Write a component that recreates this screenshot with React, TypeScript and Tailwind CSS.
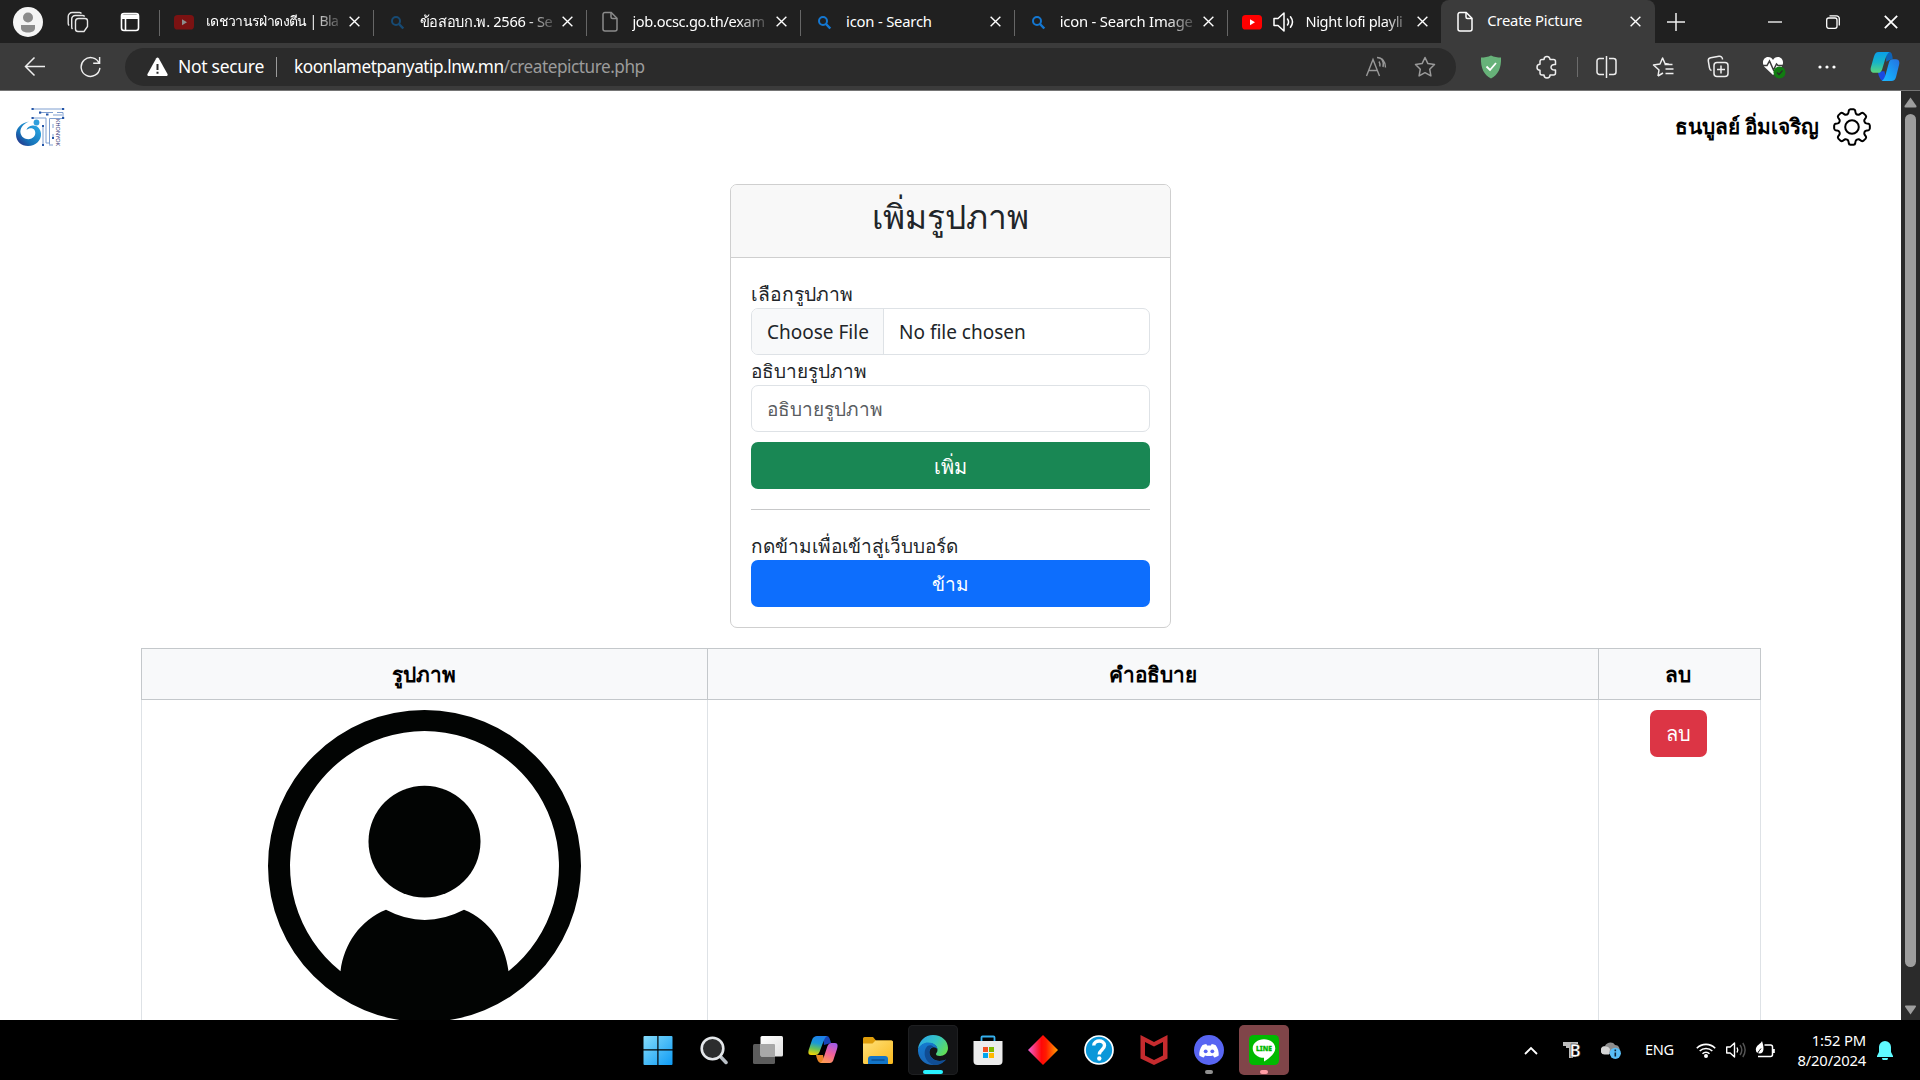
import type { ReactNode } from "react";

type IconProps = { className?: string };

const X = ({ className = "w-[11px] h-[11px]" }: IconProps) => (
  <svg className={className} viewBox="0 0 12 12" stroke="#fff" strokeWidth="1.5" fill="none">
    <path d="M.7.7l10.6 10.6M11.3.7L.7 11.3" />
  </svg>
);

const YouTube = ({ dim = false }: { dim?: boolean }) => (
  <svg className="w-5 h-5 shrink-0" viewBox="0 0 20 20">
    <rect x="0" y="3" width="20" height="14.5" rx="3.6" fill={dim ? "#7b1212" : "#f00"} />
    <path d="M8 7.2v6l5-3z" fill={dim ? "#8d8d8d" : "#fff"} />
  </svg>
);

const SearchTab = ({ dim = false }: { dim?: boolean }) => (
  <svg className="-ml-px mr-px w-5 h-5 shrink-0" viewBox="0 0 20 20" fill="none" stroke={dim ? "#174a73" : "#1477d1"} strokeWidth="2">
    <circle cx="9" cy="9" r="4" />
    <path d="M12 12l4.300 4.500" strokeWidth="2.500" />
  </svg>
);

const Doc = ({ dim = false }: { dim?: boolean }) => (
  <svg className="-ml-px mr-px w-5 h-[22px] shrink-0" viewBox="0 0 20 22" fill="none" stroke={dim ? "#8b8b8b" : "#fff"} strokeWidth="1.500">
    <path d="M5 1.500h6.200L17 7.300V18a2 2 0 0 1-2 2H5a2 2 0 0 1-2-2V3.500a2 2 0 0 1 2-2z" />
    <path d="M11 1.700V6a1.500 1.500 0 0 0 1.500 1.500H17" />
  </svg>
);

const Sound = () => (
  <svg className="ml-[10px] w-[23px] h-[22px] shrink-0" viewBox="0 0 23 22" fill="none" stroke="#fff" strokeWidth="1.500" strokeLinejoin="round" strokeLinecap="round">
    <path d="M2 7.500h4L12 2v18l-6-5.500H2z" />
    <path d="M15.500 8c1.400 2 1.400 4 0 6M18.500 5.800c2.600 3.400 2.600 7 0 10.400" />
  </svg>
);

type TabProps = { icon: ReactNode; title: string; gap: string; w: string; text?: string; fade?: boolean };

function Tab({ icon, title, gap, w, text = "text-[14.800px] tracking-[-0.200px]", fade = true }: TabProps) {
  return (
    <div className="flex h-[42px] w-[213.700px] shrink-0 items-center border-l border-[#606060] pl-[14px] [border-image:linear-gradient(to_bottom,transparent_10px,#666_10px,#666_34px,transparent_34px)_1]">
      {icon}
      <div className={`${gap} ${w} ${text} h-[26px] shrink-0 whitespace-nowrap leading-6 text-white ${fade ? "[mask-image:linear-gradient(to_right,#000_78%,rgba(0,0,0,0.150)_100%)]" : ""}`}>
        {title}
      </div>
      <div className="ml-auto mr-[13px]"><X /></div>
    </div>
  );
}

function TabStrip() {
  return (
    <div className="flex h-[43px] items-center bg-[#202020]">
      <div className="ml-[13px] flex w-[146px] shrink-0 items-center">
        <svg className="h-[30px] w-[30px]" viewBox="0 0 30 30">
          <circle cx="15" cy="15" r="15" fill="#f5f5f5" />
          <circle cx="15" cy="10.500" r="5" fill="#8b8b8b" />
          <path d="M8 18h14v3c0 3-3 4.500-7 4.500S8 24 8 21z" fill="#8b8b8b" />
        </svg>
        <svg className="ml-6 h-[22px] w-[22px]" viewBox="0 0 22 22" fill="none" stroke="#e6e6e6" strokeWidth="1.400">
          <path d="M11.500 7.500h6.500a2.500 2.500 0 0 1 2.500 2.500v5.500l-3.500 5H11a2.500 2.500 0 0 1-2.500-2.500v-7.500a3 3 0 0 1 3-3z" />
          <path d="M5.500 18A2.500 2.500 0 0 1 4.700 16V8a3.500 3.500 0 0 1 3.500-3.500h7.300a3 3 0 0 1 2.200 1M2.200 14.500A2.500 2.500 0 0 1 1.200 12.500V5.500a4 4 0 0 1 4-4H12A3 3 0 0 1 14.500 2.500" />
        </svg>
        <svg className="ml-[31px] h-5 w-5" viewBox="0 0 20 20" fill="none" stroke="#fff" strokeWidth="1.600">
          <rect x="1.500" y="1.500" width="17" height="17" rx="2.500" />
          <path d="M1.500 6.300h17M5.500 6v12" />
          <path d="M2 4.200h16" strokeWidth="3.500" />
        </svg>
      </div>
      <Tab icon={<YouTube dim />} title="เดชวานรฝ่าดงตีน | Bla" gap="ml-3" w="w-[135px]" text="text-[14px] tracking-[-0.650px]" />
      <Tab icon={<SearchTab dim />} title="ข้อสอบก.พ. 2566 - Se" gap="ml-3" w="w-[135px]" text="text-[14.600px] tracking-[-0.300px]" />
      <Tab icon={<Doc dim />} title="job.ocsc.go.th/exam" gap="ml-[11px]" w="w-[135px]" text="text-[14.600px] tracking-[-0.300px]" />
      <Tab icon={<SearchTab />} title="icon - Search" gap="ml-[11px]" w="w-[135px]" fade={false} />
      <Tab icon={<SearchTab />} title="icon - Search Image" gap="ml-[11px]" w="w-[135px]" />
      <Tab icon={<><YouTube /><Sound /></>} title="Night lofi playli" gap="ml-[10px]" w="w-[103px]" text="text-[14.600px] tracking-[-0.350px]" />
      <div className="flex h-[43px] w-[214px] shrink-0 items-center rounded-t-[8px] bg-[#3b3b3b] pl-[15px]">
        <Doc />
        <span className="ml-[11px] w-[130px] whitespace-nowrap pb-[2px] text-[14.800px] tracking-[-0.200px] text-white">Create Picture</span>
        <div className="ml-auto mr-[14px]"><X /></div>
      </div>
      <svg className="ml-3 h-[18px] w-[18px]" viewBox="0 0 18 18" stroke="#eee" strokeWidth="1.500"><path d="M9 0v18M0 9h18" /></svg>
      <div className="ml-auto mr-[22px] flex items-center gap-[44px]">
        <svg className="h-[14px] w-[14px]" viewBox="0 0 14 14" stroke="#fff" strokeWidth="1.300"><path d="M0 7h14" /></svg>
        <svg className="h-[14px] w-[14px]" viewBox="0 0 14 14" stroke="#fff" strokeWidth="1.300" fill="none">
          <rect x=".7" y="3" width="10.300" height="10.300" rx="2" />
          <path d="M3.500 .8H10.500A2.800 2.800 0 0 1 13.300 3.600V10.500" />
        </svg>
        <X className="h-[14px] w-[14px]" />
      </div>
    </div>
  );
}

const Star = ({ className = "" }: IconProps) => (
  <svg className={className} viewBox="0 0 22 22" fill="none" stroke="#9a9a9a" strokeWidth="1.500" strokeLinejoin="round">
    <path d="M11 1.500l2.900 6.100 6.600.9-4.800 4.700 1.200 6.700L11 16.700l-5.900 3.200 1.200-6.700L1.500 8.500l6.600-.9z" />
  </svg>
);

function Toolbar() {
  return (
    <div className="flex h-12 items-center border-b border-[#757575] bg-[#3b3b3b]">
      <svg className="ml-6 h-[22px] w-[22px]" viewBox="0 0 22 22" fill="none" stroke="#eee" strokeWidth="1.500"><path d="M21 10.500H1.500M10.500 1.500l-9 9 9 9" /></svg>
      <svg className="ml-[33px] mr-px h-[23px] w-[23px]" viewBox="0 0 24 24" fill="none" stroke="#eee" strokeWidth="1.500">
        <path d="M21.200 9A9.800 9.800 0 1 0 21.800 13.500M21.500 2v6.700h-6.700" />
      </svg>
      <div className="ml-[22px] flex h-[38px] w-[1331px] shrink-0 items-center rounded-full bg-[#2b2b2b] pl-[22px] text-[17.500px] text-white">
        <svg className="h-5 w-[21px]" viewBox="0 0 21 20"><path d="M9.300 1.200a1.400 1.400 0 0 1 2.400 0l8.800 15.900a1.400 1.400 0 0 1-1.200 2H1.700a1.400 1.400 0 0 1-1.200-2z" fill="#fff" /><path d="M10.500 7v6M10.500 14.700v2" stroke="#2b2b2b" strokeWidth="2" /></svg>
        <span className="ml-[10px] w-[85px] whitespace-nowrap tracking-[-0.300px]">Not secure</span>
        <span className="ml-[13px] h-5 w-px bg-[#9b9b9b]" />
        <span className="ml-[17px] whitespace-nowrap text-[17.200px] tracking-[-0.470px]">koonlametpanyatip.lnw.mn<span className="text-[#9c9c9c]">/createpicture.php</span></span>
        <svg className="ml-auto h-[22px] w-[22px]" viewBox="0 0 22 22" fill="none" stroke="#989898" strokeWidth="1.400">
          <path d="M1.500 20L8 3.500 14.500 20M4 14.500h8M14 5.500c1 1.500 1.200 3 .8 5M16.800 3c1.600 2.500 1.900 5 1.200 8" />
          <path d="M12 1.500c5 0 8.500 4 8.500 10" />
        </svg>
        <Star className="ml-[27px] mr-5 h-[22px] w-[22px]" />
      </div>
      <svg className="ml-[24px] h-6 w-[22px]" viewBox="0 0 22 24"><path d="M11 .5c3 1.500 6.500 2 10 2C21.500 13 18 20 11 23.500 4 20 .5 13 1 2.500c3.500 0 7-.5 10-2z" fill="#67b279" /><path d="M6.500 11.500l3.500 3.500 6-7" stroke="#fff" strokeWidth="1.800" fill="none" /></svg>
      <svg className="ml-[34px] h-[24px] w-[22px]" viewBox="0 0 22 24" fill="none" stroke="#eee" strokeWidth="1.500" strokeLinejoin="round">
        <path d="M8 4.500A3 3 0 0 1 14 4.500H17.500A2 2 0 0 1 19.500 6.500V9.500C16.500 9 15 10.500 15 12.200S16.500 15.500 19.500 15V18a2 2 0 0 1-2 2H14A3 3 0 0 1 8 20H6A2 2 0 0 1 4 18V15.200A3 3 0 0 1 4 9.200V6.500A2 2 0 0 1 6 4.500z" />
      </svg>
      <span className="ml-[19px] h-5 w-px bg-[#6c6c6c]" />
      <svg className="ml-[18px] h-[22px] w-[21px]" viewBox="0 0 21 22" fill="none" stroke="#eee" strokeWidth="1.500"><path d="M8 2.500H3.500a2.500 2.500 0 0 0-2.500 2.500V16a2.500 2.500 0 0 0 2.500 2.500H8M13 2.500h4.500A2.500 2.500 0 0 1 20 5V16a2.500 2.500 0 0 1-2.500 2.500H13M10.500 0v22" /></svg>
      <svg className="ml-[35px] h-[22px] w-[22px]" viewBox="0 0 22 22" fill="none" stroke="#eee" strokeWidth="1.500" strokeLinejoin="round"><path d="M6 20l1-6-5.500-5L8 8l2.600-6L13 7.500M6 20l5-3M12.500 8.500h8M13.500 13h8M13.500 17.500h8M13 7.500l4 .8" /></svg>
      <svg className="ml-[33px] h-[23px] w-[23px]" viewBox="0 0 23 23" fill="none" stroke="#eee" strokeWidth="1.500"><rect x="7" y="7.500" width="14" height="14" rx="3" /><path d="M14 10.500v8M10 14.500h8M4.500 15.500A3 3 0 0 1 2.500 13L1.300 6A3 3 0 0 1 3.700 2.700L12 1.300A3 3 0 0 1 15.500 4.500" /></svg>
      <svg className="ml-[32px] h-[26px] w-6" viewBox="0 0 24 26"><path d="M11 21L2.500 13C-1 8 2 3 6 3c2.500 0 4 1 5 3 1-2 2.500-3 5-3 4 0 7 5 3.500 10z" fill="#fff" /><path d="M0 11.500h5l2.500-4.500 4 9 3-6 1.500 1.500h5" stroke="#3b3b3b" strokeWidth="1.500" fill="none" /><circle cx="17.500" cy="18.500" r="6" fill="#107c10" /><path d="M15 18.500l2 2 3.500-4" stroke="#2b2b2b" strokeWidth="1.300" fill="none" /></svg>
      <svg className="ml-[32px] h-1 w-[18px]" viewBox="0 0 18 4" fill="#fff"><circle cx="2" cy="2" r="1.600" /><circle cx="9" cy="2" r="1.600" /><circle cx="16" cy="2" r="1.600" /></svg>
      <svg className="ml-[34px] mb-px h-[29px] w-[30px]" viewBox="0 0 31 30">
        <defs>
          <linearGradient id="tbA" x1="0" y1="0" x2="0" y2="1"><stop offset="0" stopColor="#0a9ee8" /><stop offset=".5" stopColor="#17b5c8" /><stop offset="1" stopColor="#5bd67a" /></linearGradient>
          <linearGradient id="tbB" x1="1" y1="0" x2="0" y2="1"><stop offset="0" stopColor="#2670e0" /><stop offset=".6" stopColor="#17a2f7" /><stop offset="1" stopColor="#20b8ff" /></linearGradient>
        </defs>
        <path d="M17 0h3c2 0 3 2 3.500 7l-7 3z" fill="#0d63b8" />
        <path d="M8 20h7l2 10h-3c-3 0-5-4-6-10z" fill="#1a49e0" />
        <path d="M9 0h11c-2 1-3.500 5-4.500 8l-3 10c-1 2.500-2 3.500-4 3.500H4c-3 0-4-3-3-6L4 5C5 2 6 0 9 0z" fill="url(#tbA)" />
        <path d="M22 30H12c2-1 3.500-4 4.500-8l3-11c1-2.500 2-3.500 4-3.500h3.500c3 0 4 3 3 6l-3 12c-1 3-2 4.500-5 4.500z" fill="url(#tbB)" />
      </svg>
    </div>
  );
}

function Gear() {
  const pts: string[] = [];
  for (let i = 0; i < 8; i++) {
    const a = (i * Math.PI) / 4 - Math.PI / 2;
    const p = (r: number, d: number) => `${(20 + r * Math.cos(a + d)).toFixed(2)} ${(20 + r * Math.sin(a + d)).toFixed(2)}`;
    pts.push(`${i === 0 ? "M" : "L"}${p(14, -0.28)}Q${p(15.6, -0.21)} ${p(16.8, -0.19)}Q${p(17.8, -0.17)} ${p(17.9, -0.08)}L${p(17.9, 0.08)}Q${p(17.8, 0.17)} ${p(16.8, 0.19)}Q${p(15.6, 0.21)} ${p(14, 0.28)}Q${p(13, 0.39)} ${p(14, 0.5)}`);
  }
  return (
    <svg className="h-10 w-10" viewBox="0 0 40 40" fill="none" stroke="#000" strokeWidth="2" strokeLinejoin="round">
      <path d={pts.join("") + "Z"} />
      <circle cx="20" cy="20" r="6.800" />
    </svg>
  );
}

function Logo() {
  return (
    <svg className="h-10 w-[50px]" viewBox="0 0 50 40">
      <defs><linearGradient id="lg" x1="0" y1="1" x2="1" y2="0"><stop offset="0" stopColor="#2b1f7a" /><stop offset=".35" stopColor="#1672b8" /><stop offset="1" stopColor="#2fb5ee" /></linearGradient></defs>
      <path d="M14 14.500C6 16 1 21 1 27.500c0 7 5.500 11.500 12 11.500 8 0 13.500-6 13-12.500-.5-5-4-8.500-8.500-8-3 .3-5.500 2-6 4.500 2.500-2.500 6.500-2.500 8 0 1.800 3.200.5 7-3 8.500-4.500 2-10-.5-11-5.500-.8-4.500 2.500-9 8.500-11.500z" fill="url(#lg)" />
      <circle cx="21.500" cy="15.500" r="2.900" fill="#2e9fdd" />
      <g stroke="#7f9fd0" strokeWidth="1" fill="none">
        <path d="M18 2h30M25 5.500h13M18 11h13v25M42 5.500h6v6H34.500v26M38 8h9M28 19v19M31 36h4M38 17v4M38 27v5M34 38h4" />
      </g>
      <g fill="#2355a8"><rect x="16.500" y="1" width="2.200" height="2" /><rect x="47" y="1" width="2.200" height="2" /><rect x="24" y="4.500" width="2.200" height="2.200" /><rect x="16.500" y="10" width="2.200" height="2" /><rect x="47" y="10" width="2.200" height="2" /><rect x="31" y="6.500" width="2.500" height="2" /><rect x="27" y="18" width="2" height="2" /><rect x="37" y="30" width="2" height="2" /><rect x="27" y="37" width="2" height="2" /></g>
      <text transform="translate(40.500 12) rotate(90)" fontSize="5.600" fill="#343477" textLength="27" lengthAdjust="spacingAndGlyphs" fontFamily="Noto Sans">KHONYOK</text>
    </svg>
  );
}

function Page() {
  return (
    <div className="flex h-[929px] overflow-hidden bg-white">
      <div className="flex w-[1901px] shrink-0 flex-col items-center overflow-hidden">
        <div className="flex h-[93px] w-full shrink-0 items-start justify-between pl-[15px] pr-[29px] pt-4">
          <Logo />
          <div className="flex items-center">
            <span className="mr-[13px] whitespace-nowrap pb-[2px] text-[20.800px] font-bold leading-[38px] text-black">ธนบูลย์ อิ่มเจริญ</span>
            <Gear />
          </div>
        </div>
        <div className="h-[444px] w-[441px] shrink-0 overflow-hidden rounded-[7px] border border-[#cfcfcf] text-[19px] text-[#212529]">
          <div className="flex h-[73px] items-center justify-center border-b border-[#cfcfcf] bg-[#f8f8f8]">
            <h2 className="pb-[10px] text-[33.500px] font-medium leading-[48px]">เพิ่มรูปภาพ</h2>
          </div>
          <div className="px-5 pt-5">
            <label className="block h-[30px] text-[19.300px] leading-[32px]">เลือกรูปภาพ</label>
            <div className="flex h-[47px] overflow-hidden rounded-[7px] border border-[#dee2e6] leading-[46px]">
              <div className="w-[132px] shrink-0 whitespace-nowrap border-r border-[#dee2e6] bg-[#f8f9fa] pl-[15px]">Choose File</div>
              <div className="pl-[15px]">No file chosen</div>
            </div>
            <label className="block h-[30px] leading-[32px]">อธิบายรูปภาพ</label>
            <div className="h-[47px] rounded-[7px] border border-[#dee2e6] pl-[15px] leading-[46px] text-[#595c5f]">อธิบายรูปภาพ</div>
            <button className="mt-[10px] block h-[47px] w-full rounded-[7px] bg-[#198754] pt-[2px] text-[20px] font-medium text-white">เพิ่ม</button>
            <div className="mt-5 h-px bg-[#c7c8c9]" />
            <p className="mt-5 h-[30px] leading-[32px]">กดข้ามเพื่อเข้าสู่เว็บบอร์ด</p>
            <button className="block h-[47px] w-full rounded-[7px] bg-[#0d6efd] pt-[2px] pr-px font-medium text-white">ข้าม</button>
          </div>
        </div>
        <div className="mt-5 grid w-[1620px] shrink-0 grid-cols-[567px_890px_163px] text-[20px]">
          <div className="h-[52px] border border-[#c4c8cb] bg-[#f8f9fa] text-center text-[20.800px] font-bold leading-[50px] text-black">รูปภาพ</div>
          <div className="h-[52px] border-y border-[#c4c8cb] bg-[#f8f9fa] text-center text-[20.800px] font-bold leading-[50px] text-black">คำอธิบาย</div>
          <div className="h-[52px] border border-[#c4c8cb] bg-[#f8f9fa] pr-[2px] text-center text-[20.800px] font-bold leading-[50px] text-black">ลบ</div>
          <div className="flex h-[340px] justify-center border-x border-[#dee2e6] pt-[10px]">
            <svg className="h-[312px] w-[313px]" viewBox="0 0 313 313" preserveAspectRatio="none" fill="#020403">
              <path fillRule="evenodd" d="M156.500 0a156.500 156.500 0 1 1 0 313a156.500 156.500 0 1 1 0-313zM156.500 21A135.500 135.500 0 0 0 72.500 262C76 235 92 211 118 200.500Q156.500 221 196 200.500C222 211 237 235 240.500 262A135.500 135.500 0 0 0 156.500 21z" />
              <circle cx="156.500" cy="132" r="56" />
            </svg>
          </div>
          <div className="h-[340px]" />
          <div className="flex h-[340px] items-start justify-center border-x border-[#dee2e6] pr-px pt-[10px]">
            <button className="h-[47px] w-[57px] rounded-[7px] bg-[#dc3545] pr-px pt-px font-medium text-white">ลบ</button>
          </div>
        </div>
      </div>
      <div className="flex w-[19px] flex-col items-center bg-[#2b2b2b]">
        <svg className="mt-[6px] h-[11px] w-[13px] shrink-0" viewBox="0 0 13 11"><path d="M6.500 .5L12.500 9q.3 1.500-1 1.500h-10q-1.300 0-1-1.500z" fill="#9e9e9e" /></svg>
        <div className="mt-[6px] h-[853px] w-[11px] shrink-0 rounded-full bg-[#9e9e9e]" />
        <svg className="mt-[38px] h-[10px] w-[13px] shrink-0" viewBox="0 0 13 11"><path d="M6.500 10.500L12.500 2q.3-1.500-1-1.500h-10q-1.300 0-1 1.500z" fill="#9e9e9e" /></svg>
      </div>
    </div>
  );
}

const slot = "flex h-[50px] w-[50px] shrink-0 flex-col items-center rounded-[5px] pt-[10px]";
const ico = "h-[30px] w-[30px] shrink-0";

function Taskbar() {
  return (
    <div className="flex h-[60px] items-center bg-black text-white">
      <div className="ml-[632.500px] flex shrink-0 gap-[5.150px]">
        <div className={slot}>
          <svg className={ico} viewBox="0 0 30 30">
            <defs><linearGradient id="win" x1="0" y1="0" x2="1" y2="1"><stop offset="0" stopColor="#85dcfb" /><stop offset="1" stopColor="#0e9bf4" /></linearGradient></defs>
            <path d="M1.500 1h12.800v13.300H.5V2a1 1 0 0 1 1-1zM15.500 1h13a1 1 0 0 1 1 1v12.300h-14zM.5 15.500h13.800V30H1.500a1 1 0 0 1-1-1zM15.500 15.500h14V29a1 1 0 0 1-1 1h-13z" fill="url(#win)" />
          </svg>
        </div>
        <div className={slot}>
          <svg className={ico} viewBox="0 0 30 30"><path d="M21 20l7 7.500" stroke="#b9bfc6" strokeWidth="3.500" strokeLinecap="round" /><circle cx="14.500" cy="13.500" r="10.800" fill="#2c2d2e" stroke="#e4e7ea" strokeWidth="2.600" /></svg>
        </div>
        <div className={slot}>
          <svg className={ico} viewBox="0 0 30 30"><defs><linearGradient id="tv" x1="0" y1="0" x2="1" y2="1"><stop offset="0" stopColor="#fff" /><stop offset="1" stopColor="#e0e0e0" /></linearGradient></defs><rect x="0" y="9" width="22" height="20" rx="1.500" fill="#5c5c5c" /><rect x="7.500" y="1" width="22.500" height="20.500" rx="1.500" fill="url(#tv)" /><path d="M7.500 9H21a1 1 0 0 1 1 1v11.500H9a1.500 1.500 0 0 1-1.500-1.500z" fill="#a8a8a8" /></svg>
        </div>
        <div className={slot}>
          <svg className={ico} viewBox="0 0 30 30">
            <defs>
              <linearGradient id="cpA" x1=".4" y1="0" x2=".2" y2="1"><stop offset="0" stopColor="#1e80e8" /><stop offset=".35" stopColor="#1999d8" /><stop offset=".65" stopColor="#64c15a" /><stop offset="1" stopColor="#fbd600" /></linearGradient>
              <linearGradient id="cpB" x1=".7" y1="0" x2=".3" y2="1"><stop offset="0" stopColor="#a25be6" /><stop offset=".5" stopColor="#f2619a" /><stop offset="1" stopColor="#ff9b55" /></linearGradient>
            </defs>
            <path d="M15 1h4c2 0 3 3 4 7l-7 2z" fill="#1745b8" />
            <path d="M8 20h7l2 8h-4c-3 0-4-4-5-8z" fill="#e88526" />
            <path d="M9 1h10c-2 1-3.500 5-4.500 8l-3 8c-1 2-2 3-4 3H3c-3 0-3-3-2-6L4 5c1-3 3-4 5-4z" fill="url(#cpA)" />
            <path d="M21 28H12c2-1 3.500-4 4.500-8l3-9c1-2 2-3 4-3h3.500c3 0 3 3 2 6l-3 9c-1 4-2 5-5 5z" fill="url(#cpB)" />
          </svg>
        </div>
        <div className={slot}>
          <svg className={ico} viewBox="0 0 30 30"><defs><linearGradient id="fo" x1="0" y1="0" x2="1" y2="1"><stop offset="0" stopColor="#ffe17a" /><stop offset="1" stopColor="#f9b91d" /></linearGradient></defs><path d="M0 3.500A1.500 1.500 0 0 1 1.500 2H10l3 3.500H28a2 2 0 0 1 2 2V14H0z" fill="#df9d0a" /><path d="M0 8.500h9.500L12.500 5.500H28.500A1.500 1.500 0 0 1 30 7v20.500a1.500 1.500 0 0 1-1.500 1.500h-27A1.500 1.500 0 0 1 0 27.500z" fill="url(#fo)" /><path d="M5 29v-5a3 3 0 0 1 3-3h14a3 3 0 0 1 3 3v5z" fill="#1275c9" /><path d="M9 25h12" stroke="#0a4f93" strokeWidth="1.500" strokeLinecap="round" /></svg>
        </div>
        <div className={`${slot} bg-[#131416] ring-1 ring-inset ring-[#1e1f21]`}>
          <svg className={ico} viewBox="0 0 30 30">
            <defs>
              <linearGradient id="edA" x1="0" y1=".2" x2="1" y2=".7"><stop offset="0" stopColor="#2aa6e8" /><stop offset=".5" stopColor="#35c4c4" /><stop offset="1" stopColor="#63df52" /></linearGradient>
              <linearGradient id="edB" x1=".3" y1="0" x2=".5" y2="1"><stop offset="0" stopColor="#1479cf" /><stop offset="1" stopColor="#1a66b5" /></linearGradient>
            </defs>
            <path d="M0 14C1 6 7 0 15 0c9 0 15 6 15 13 0 5-4 8-8 8-3 0-4-1-4-2s1.500-1.500 1.500-4c0-4-4-7-9-7-4 0-8 2-10.500 6z" fill="url(#edA)" />
            <path d="M0 14c2-4 6-6.500 10-6.500 6 0 9.500 3.500 9.500 7-2-3.500-7-3-8 1.500-1 5 4 10 10 10 3 0 5.500-1 6.500-1.500C25 28 20 30 15 30 6 30-.5 23 0 14z" fill="url(#edB)" />
            <path d="M9.500 11C5 15 5 26 15.500 30c5 .5 10-2 12.500-5.500-1 .5-3.500 1.500-6.500 1.500-6 0-11-5-10-10 .4-2.500 2-4 4-4.300-2-1.700-4-1.700-6-.7z" fill="#104d94" />
          </svg>
          <div className="mt-[5px] h-1 w-5 rounded-full bg-[#29f1ff]" />
        </div>
        <div className={slot}>
          <svg className={ico} viewBox="0 0 30 30"><path d="M8.500 7V2.500a1 1 0 0 1 1-1h11a1 1 0 0 1 1 1V7" fill="none" stroke="#35b0ee" strokeWidth="1.800" /><path d="M.5 6h29v20a4 4 0 0 1-4 4h-21a4 4 0 0 1-4-4z" fill="#ececec" /><path fill="#f25022" d="M10 12h5v5h-5z" /><path fill="#7fba00" d="M16 12h5v5h-5z" /><path fill="#00a4ef" d="M10 18h5v5h-5z" /><path fill="#ffb900" d="M16 18h5v5h-5z" /></svg>
        </div>
        <div className={slot}>
          <svg className={ico} viewBox="0 0 30 30"><defs><linearGradient id="di"><stop offset="0" stopColor="#f060d8" /><stop offset=".45" stopColor="#ff0808" /><stop offset=".6" stopColor="#ff1a00" /><stop offset="1" stopColor="#ffa000" /></linearGradient></defs><path d="M15 0l15 15-15 15L0 15z" fill="url(#di)" /></svg>
        </div>
        <div className={slot}>
          <svg className={ico} viewBox="0 0 30 30"><circle cx="15" cy="15" r="14" fill="#0a97d9" stroke="#fff" strokeWidth="1.700" /><path d="M9.800 10.500C10 4.500 20.500 4.500 20.500 10.500c0 4-5.200 4.500-5.200 9" stroke="#fff" strokeWidth="3.400" fill="none" /><circle cx="15.300" cy="23.500" r="2.200" fill="#fff" /></svg>
        </div>
        <div className={slot}>
          <svg className={ico} viewBox="0 0 30 30"><path d="M1.500 0L15 7 28.500 0v23.500L15 30 1.500 23.500zM6 7v13.500l9 4.500 9-4.500V7l-9 4.500z" fill="#c52b2e" fillRule="evenodd" /></svg>
        </div>
        <div className={slot}>
          <svg className={ico} viewBox="0 0 30 30"><circle cx="15" cy="15" r="15" fill="#5865f2" /><path d="M12.300 9c-1.600.2-3 .6-4 1.200C6 13.500 5 17 5.300 20.500c1.600 1.200 3 1.700 4.500 2l1.200-2c2.500.7 5.500.7 8 0l1.200 2c1.500-.3 2.900-.8 4.500-2 .3-3.500-.7-7-3-10.300-1-.6-2.400-1-4-1.200l-.8 1.400h-3.800z" fill="#fff" /><circle cx="11.700" cy="16.300" r="1.900" fill="#5865f2" /><circle cx="18.300" cy="16.300" r="1.900" fill="#5865f2" /></svg>
          <div className="mt-[5px] h-1 w-2 rounded-full bg-[#8f8f8f]" />
        </div>
        <div className={`${slot} bg-[#804549]`}>
          <svg className={ico} viewBox="0 0 30 30"><rect width="30" height="30" rx="4.500" fill="#00b900" /><path d="M15 4.200c6.400 0 11.300 4 11.300 9.200 0 5-6.300 10-11.300 13v-3.600C8.600 22.800 3.700 18.500 3.700 13.400 3.700 8.200 8.600 4.200 15 4.200z" fill="#fff" /><text x="15" y="16.300" fontSize="7.500" fontWeight="900" textAnchor="middle" fill="#00b900" stroke="#00b900" strokeWidth=".3" fontFamily="Noto Sans" textLength="16" lengthAdjust="spacingAndGlyphs">LINE</text></svg>
          <div className="mt-[5px] h-1 w-2 rounded-full bg-[#ff9ba3]" />
        </div>
      </div>
      <div className="ml-auto flex shrink-0 items-center">
        <svg className="h-[9px] w-[14px]" viewBox="0 0 14 9" fill="none" stroke="#fff" strokeWidth="1.800"><path d="M1 8l6-6 6 6" /></svg>
        <div className="ml-[25px] flex h-5 w-[19px] items-center justify-center">
          <svg className="h-[19px] w-[19px] shrink-0" viewBox="0 0 19 19" fontFamily="Noto Sans" fontWeight="700"><path d="M0 1h15v4h-2V3.500H10V17H6V7H3V5H0z" fill="#bdbdbd" /><text x="6.500" y="16" fontSize="17" fill="#fff" stroke="#111" strokeWidth=".5">B</text></svg>
        </div>
        <svg className="ml-[19px] h-[18px] w-5" viewBox="0 0 20 18"><path d="M4 13a4 4 0 0 1 0-8C5.500 1 12 0 14 4c3.500 0 5 3 4.500 6L14 13z" fill="#8d8d8d" /><path d="M4 13.500a4 4 0 0 1-.5-8C7 5 8 6.500 9 8l-1 5.500z" fill="#d5d5d5" /><circle cx="14.300" cy="12.300" r="5.600" fill="#58bdf5" /><path d="M14.300 11.500v4M14.300 8.500v1.800" stroke="#123" strokeWidth="1.600" /></svg>
        <span className="ml-6 w-[30px] whitespace-nowrap text-[14.600px] tracking-[-0.300px]">ENG</span>
        <svg className="ml-[21px] h-[16px] w-5" viewBox="0 0 20 16" fill="none" stroke="#fff" strokeWidth="1.600"><path d="M.8 6.200a13 13 0 0 1 18.400 0M3.700 9a9 9 0 0 1 12.600 0M6.500 11.800a5 5 0 0 1 7 0" /><circle cx="10" cy="14" r="1.200" fill="#fff" /></svg>
        <svg className="ml-[10px] h-[18px] w-5" viewBox="0 0 20 18" fill="none" stroke="#fff" strokeWidth="1.400" strokeLinejoin="round"><path d="M.7 6h3.500L8.500 2v14l-4.300-4H.7z" /><path d="M11 6.500c1 1.600 1 3.400 0 5" /><path d="M14 4c2.200 3 2.200 7 0 10M16.800 2c3 4.500 3 9.500 0 14" stroke="#555" /></svg>
        <svg className="ml-[9px] mb-[2px] mr-px h-[19px] w-5" viewBox="0 0 20 19" fill="none" stroke="#fff" strokeWidth="1.500"><path d="M9.500 5H15.500a2 2 0 0 1 2 2v7.500a2 2 0 0 1-2 2H3" /><path d="M18.800 9v4" strokeWidth="2" /><path d="M7 1C6 4 1 5 .8 9.500c0 3 2 4 4 4 4.500 0 4.500-6 2.200-12.500z" fill="#fff" stroke="none" /><path d="M1 16.500C2.500 13 4 11 6 8.500" stroke="#000" strokeWidth="1" /></svg>
        <div className="ml-4 w-[74px] whitespace-nowrap text-right text-[14.800px] leading-5 tracking-[-0.200px]">1:52 PM<br />8/20/2024</div>
        <svg className="ml-[11px] mr-[27px] h-[19px] w-4" viewBox="0 0 16 19" fill="#5ffaff"><path d="M8 0a6 6 0 0 1 6 6v5l2 4v1H0v-1l2-4V6a6 6 0 0 1 6-6zM5 17h6a3 2.500 0 0 1-6 0z" /></svg>
      </div>
    </div>
  );
}

export default function App() {
  return (
    <div className="flex h-[1080px] w-[1920px] flex-col overflow-hidden font-['Noto_Sans',sans-serif]">
      <TabStrip />
      <Toolbar />
      <Page />
      <Taskbar />
    </div>
  );
}
